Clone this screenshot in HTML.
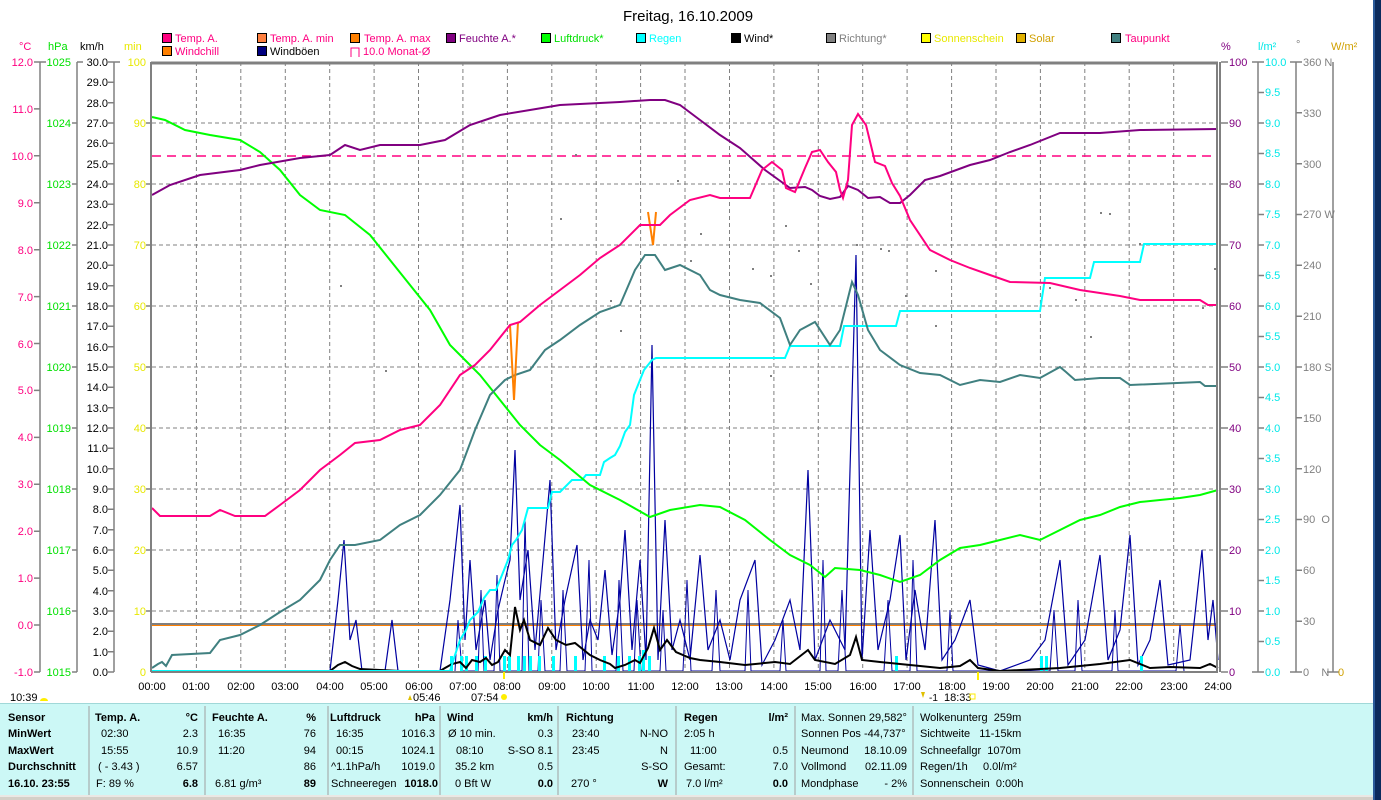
<!DOCTYPE html>
<html><head><meta charset="utf-8"><style>
html,body{margin:0;padding:0;background:#fff;width:1381px;height:800px;overflow:hidden}
svg{display:block;font-family:"Liberation Sans",sans-serif;font-size:11px}
.b{font-weight:bold}
</style></head><body>
<svg width="1381" height="800" viewBox="0 0 1381 800">
<rect x="0" y="0" width="1381" height="800" fill="#fff"/>
<rect x="1373" y="0" width="8" height="800" fill="#0b2a5c"/>
<rect x="1373" y="0" width="2" height="800" fill="#2a5a9a"/>
<text x="688" y="21" text-anchor="middle" font-size="15" fill="#000">Freitag, 16.10.2009</text>
<g stroke="#000" stroke-width="1">
<rect x="162.5" y="33.5" width="9" height="9" fill="#ff0080"/>
<rect x="257.5" y="33.5" width="9" height="9" fill="#ff8040"/>
<rect x="350.5" y="33.5" width="9" height="9" fill="#ff8000"/>
<rect x="446.5" y="33.5" width="9" height="9" fill="#800080"/>
<rect x="541.5" y="33.5" width="9" height="9" fill="#00ff00"/>
<rect x="636.5" y="33.5" width="9" height="9" fill="#00ffff"/>
<rect x="731.5" y="33.5" width="9" height="9" fill="#000"/>
<rect x="826.5" y="33.5" width="9" height="9" fill="#808080"/>
<rect x="921.5" y="33.5" width="9" height="9" fill="#ffff00"/>
<rect x="1016.5" y="33.5" width="9" height="9" fill="#e0b000"/>
<rect x="1111.5" y="33.5" width="9" height="9" fill="#408080"/>
<rect x="162.5" y="46.5" width="9" height="9" fill="#ff8000"/>
<rect x="257.5" y="46.5" width="9" height="9" fill="#000080"/>
</g>
<path d="M351 57V48H359V57" stroke="#ff0080" fill="none"/>
<g font-size="11">
<text x="175" y="42" fill="#ff0080">Temp. A.</text>
<text x="270" y="42" fill="#ff0080">Temp. A. min</text>
<text x="364" y="42" fill="#ff0080">Temp. A. max</text>
<text x="459" y="42" fill="#800080">Feuchte A.*</text>
<text x="554" y="42" fill="#00e000">Luftdruck*</text>
<text x="649" y="42" fill="#00ffff">Regen</text>
<text x="744" y="42" fill="#000">Wind*</text>
<text x="839" y="42" fill="#808080">Richtung*</text>
<text x="934" y="42" fill="#e8e800">Sonnenschein</text>
<text x="1029" y="42" fill="#d0a000">Solar</text>
<text x="1125" y="42" fill="#ff0080">Taupunkt</text>
<text x="175" y="55" fill="#ff0080">Windchill</text>
<text x="270" y="55" fill="#000">Windböen</text>
<text x="363" y="55" fill="#ff0080">10.0 Monat-Ø</text>
<text x="19" y="50" fill="#ff0080">°C</text>
<text x="48" y="50" fill="#00e000">hPa</text>
<text x="80" y="50" fill="#000">km/h</text>
<text x="124" y="50" fill="#e8e800">min</text>
<text x="1221" y="50" fill="#800080">%</text>
<text x="1258" y="50" fill="#00e8e8">l/m²</text>
<text x="1296" y="48" fill="#808080">°</text>
<text x="1331" y="50" fill="#d0a000">W/m²</text>
</g>
<g stroke="#808080" stroke-width="1.5" fill="none">
<path d="M40 62V672M77 62V672M114 62V672M1258 62V672M1296 62V672M1333 62V672"/>
<path d="M34 62H40M34 108.9H40M34 155.8H40M34 202.8H40M34 249.7H40M34 296.6H40M34 343.5H40M34 390.4H40M34 437.4H40M34 484.3H40M34 531.2H40M34 578.1H40M34 625H40M34 672H40"/>
<path d="M40 62H46M72 123H77M72 184H77M72 245H77M72 306H77M72 367H77M72 428H77M72 489H77M72 550H77M72 611H77M72 672H77"/>
<path d="M77 62H83M108 62H114M108 82.3H114M108 102.7H114M108 123H114M108 143.3H114M108 163.7H114M108 184H114M108 204.3H114M108 224.7H114M108 245H114M108 265.3H114M108 285.7H114M108 306H114M108 326.3H114M108 346.7H114M108 367H114M108 387.3H114M108 407.7H114M108 428H114M108 448.3H114M108 468.7H114M108 489H114M108 509.3H114M108 529.7H114M108 550H114M108 570.3H114M108 590.7H114M108 611H114M108 631.3H114M108 651.7H114M108 672H114"/>
<path d="M114 62H120M146 123H151M146 184H151M146 245H151M146 306H151M146 367H151M146 428H151M146 489H151M146 550H151M146 611H151"/>
<path d="M1221 62H1228M1221 123H1228M1221 184H1228M1221 245H1228M1221 306H1228M1221 367H1228M1221 428H1228M1221 489H1228M1221 550H1228M1221 611H1228M1221 672H1228"/>
<path d="M1252 62H1264M1258 92.5H1264M1258 123H1264M1258 153.5H1264M1258 184H1264M1258 214.5H1264M1258 245H1264M1258 275.5H1264M1258 306H1264M1258 336.5H1264M1258 367H1264M1258 397.5H1264M1258 428H1264M1258 458.5H1264M1258 489H1264M1258 519.5H1264M1258 550H1264M1258 580.5H1264M1258 611H1264M1258 641.5H1264M1252 672H1264"/>
<path d="M1290 62H1302M1296 112.8H1302M1296 163.7H1302M1296 214.5H1302M1296 265.3H1302M1296 316.2H1302M1296 367H1302M1296 417.8H1302M1296 468.7H1302M1296 519.5H1302M1296 570.3H1302M1296 621.2H1302M1290 672H1302"/>
<path d="M1327 672H1339"/>
</g>
<g fill="#ff0080" text-anchor="end">
<text x="33" y="66">12.0</text><text x="33" y="113">11.0</text><text x="33" y="160">10.0</text><text x="33" y="207">9.0</text><text x="33" y="254">8.0</text><text x="33" y="301">7.0</text><text x="33" y="348">6.0</text><text x="33" y="394">5.0</text><text x="33" y="441">4.0</text><text x="33" y="488">3.0</text><text x="33" y="535">2.0</text><text x="33" y="582">1.0</text><text x="33" y="629">0.0</text><text x="33" y="676">-1.0</text>
</g>
<g fill="#00e000" text-anchor="end">
<text x="71" y="66">1025</text><text x="71" y="127">1024</text><text x="71" y="188">1023</text><text x="71" y="249">1022</text><text x="71" y="310">1021</text><text x="71" y="371">1020</text><text x="71" y="432">1019</text><text x="71" y="493">1018</text><text x="71" y="554">1017</text><text x="71" y="615">1016</text><text x="71" y="676">1015</text>
</g>
<g fill="#000" text-anchor="end">
<text x="108" y="66">30.0</text><text x="108" y="86">29.0</text><text x="108" y="107">28.0</text><text x="108" y="127">27.0</text><text x="108" y="147">26.0</text><text x="108" y="168">25.0</text><text x="108" y="188">24.0</text><text x="108" y="208">23.0</text><text x="108" y="229">22.0</text><text x="108" y="249">21.0</text><text x="108" y="269">20.0</text><text x="108" y="290">19.0</text><text x="108" y="310">18.0</text><text x="108" y="330">17.0</text><text x="108" y="351">16.0</text><text x="108" y="371">15.0</text><text x="108" y="391">14.0</text><text x="108" y="412">13.0</text><text x="108" y="432">12.0</text><text x="108" y="452">11.0</text><text x="108" y="473">10.0</text><text x="108" y="493">9.0</text><text x="108" y="513">8.0</text><text x="108" y="534">7.0</text><text x="108" y="554">6.0</text><text x="108" y="574">5.0</text><text x="108" y="595">4.0</text><text x="108" y="615">3.0</text><text x="108" y="635">2.0</text><text x="108" y="656">1.0</text><text x="108" y="676">0.0</text>
</g>
<g fill="#e8e800" text-anchor="end">
<text x="146" y="66">100</text><text x="146" y="127">90</text><text x="146" y="188">80</text><text x="146" y="249">70</text><text x="146" y="310">60</text><text x="146" y="371">50</text><text x="146" y="432">40</text><text x="146" y="493">30</text><text x="146" y="554">20</text><text x="146" y="615">10</text><text x="146" y="676">0</text>
</g>
<g fill="#800080">
<text x="1229" y="66">100</text><text x="1229" y="127">90</text><text x="1229" y="188">80</text><text x="1229" y="249">70</text><text x="1229" y="310">60</text><text x="1229" y="371">50</text><text x="1229" y="432">40</text><text x="1229" y="493">30</text><text x="1229" y="554">20</text><text x="1229" y="615">10</text><text x="1229" y="676">0</text>
</g>
<g fill="#00e8e8">
<text x="1265" y="66">10.0</text><text x="1265" y="96">9.5</text><text x="1265" y="127">9.0</text><text x="1265" y="157">8.5</text><text x="1265" y="188">8.0</text><text x="1265" y="218">7.5</text><text x="1265" y="249">7.0</text><text x="1265" y="279">6.5</text><text x="1265" y="310">6.0</text><text x="1265" y="340">5.5</text><text x="1265" y="371">5.0</text><text x="1265" y="401">4.5</text><text x="1265" y="432">4.0</text><text x="1265" y="462">3.5</text><text x="1265" y="493">3.0</text><text x="1265" y="523">2.5</text><text x="1265" y="554">2.0</text><text x="1265" y="584">1.5</text><text x="1265" y="615">1.0</text><text x="1265" y="645">0.5</text><text x="1265" y="676">0.0</text>
</g>
<g fill="#808080">
<text x="1303" y="66">360 N</text><text x="1303" y="117">330</text><text x="1303" y="168">300</text><text x="1303" y="218">270 W</text><text x="1303" y="269">240</text><text x="1303" y="320">210</text><text x="1303" y="371">180 S</text><text x="1303" y="422">150</text><text x="1303" y="473">120</text><text x="1303" y="523">90&#160;&#160;O</text><text x="1303" y="574">60</text><text x="1303" y="625">30</text><text x="1303" y="676">0&#160;&#160;&#160;&#160;N</text>
</g>
<text x="1338" y="676" fill="#d0a000">0</text>
<g stroke="#808080" stroke-width="1" stroke-dasharray="4 3" fill="none">
<path d="M152 123H1217M152 184H1217M152 245H1217M152 306H1217M152 367H1217M152 428H1217M152 489H1217M152 550H1217M152 611H1217"/>
<path d="M196.4 62V672M240.8 62V672M285.3 62V672M329.7 62V672M374.1 62V672M418.5 62V672M462.9 62V672M507.4 62V672M551.8 62V672M596.2 62V672M640.6 62V672M685 62V672M729.5 62V672M773.9 62V672M818.3 62V672M862.7 62V672M907.1 62V672M951.6 62V672M996 62V672M1040.4 62V672M1084.8 62V672M1129.2 62V672M1173.7 62V672"/>
</g>
<line x1="152" y1="625.5" x2="1217" y2="625.5" stroke="#ff8000" stroke-width="1"/>
<line x1="152" y1="624" x2="1217" y2="624" stroke="#808080" stroke-width="2"/>
<line x1="152" y1="156" x2="1217" y2="156" stroke="#ff0080" stroke-width="1.5" stroke-dasharray="9 6"/>
<g fill="#808080">
<rect x="575" y="154" width="2" height="2"/><rect x="560" y="218" width="2" height="2"/><rect x="677" y="180" width="2" height="2"/><rect x="690" y="260" width="2" height="2"/><rect x="785" y="225" width="2" height="2"/><rect x="798" y="250" width="2" height="2"/><rect x="856" y="244" width="2" height="2"/><rect x="880" y="248" width="2" height="2"/><rect x="935" y="270" width="2" height="2"/><rect x="1100" y="212" width="2" height="2"/><rect x="1109" y="213" width="2" height="2"/><rect x="1139" y="243" width="2" height="2"/><rect x="1214" y="268" width="2" height="2"/><rect x="1049" y="287" width="2" height="2"/><rect x="1075" y="299" width="2" height="2"/><rect x="1202" y="307" width="2" height="2"/><rect x="1090" y="336" width="2" height="2"/><rect x="770" y="275" width="2" height="2"/><rect x="752" y="268" width="2" height="2"/><rect x="810" y="283" width="2" height="2"/><rect x="905" y="295" width="2" height="2"/><rect x="888" y="250" width="2" height="2"/><rect x="935" y="325" width="2" height="2"/><rect x="770" y="375" width="2" height="2"/><rect x="385" y="370" width="2" height="2"/><rect x="340" y="285" width="2" height="2"/><rect x="620" y="330" width="2" height="2"/><rect x="610" y="300" width="2" height="2"/><rect x="700" y="233" width="2" height="2"/></g>
<polyline fill="none" stroke="#0000a0" stroke-width="1.2" points="152,671 330,671 338,600 344,540 350,640 356,620 362,671 385,671 392,620 398,671 440,671 450,600 460,505 465,640 470,560 476,650 485,600 490,660 498,610 505,580 510,560 515,450 520,600 528,550 535,650 543,560 550,480 556,650 565,600 577,545 583,660 590,620 598,640 605,570 612,655 620,600 625,530 632,650 640,560 646,660 652,345 658,660 665,520 672,650 680,620 690,660 700,555 708,650 720,620 730,660 740,600 755,560 762,665 775,640 790,600 800,650 808,470 815,660 830,620 845,650 856,255 862,660 870,530 878,650 890,600 900,535 906,660 915,590 925,650 935,520 942,660 955,640 970,600 978,665 1000,671 1030,660 1045,640 1060,560 1068,665 1085,640 1100,555 1108,660 1120,630 1130,535 1138,665 1150,640 1160,580 1168,665 1190,660 1202,550 1208,640 1213,600 1218,660"/>
<polyline fill="none" stroke="#0000a0" stroke-width="1" points="455,671 458,620 462,671 478,671 481,590 484,671 494,671 497,575 500,671 522,671 525,520 529,671 538,671 541,600 545,671 560,671 563,590 567,671 585,671 589,560 592,671 616,671 619,580 623,671 634,671 637,600 641,671 660,671 663,610 666,671 683,671 687,580 691,671 712,671 716,590 720,671 745,671 748,590 751,671 780,671 783,620 786,671 820,671 823,560 826,671 838,671 842,590 846,671 884,671 888,600 892,671 910,671 913,560 917,671 947,671 950,610 953,671 1050,671 1054,610 1058,671 1075,671 1078,600 1082,671 1112,671 1115,610 1118,671 1176,671 1180,625 1184,671"/>
<g fill="#00ffff">
<rect x="450" y="656" width="3" height="15"/><rect x="460" y="656" width="3" height="15"/><rect x="465" y="656" width="3" height="15"/><rect x="475" y="656" width="3" height="15"/><rect x="484" y="656" width="3" height="15"/><rect x="503" y="656" width="3" height="15"/><rect x="508" y="656" width="3" height="15"/><rect x="517" y="656" width="3" height="15"/><rect x="523" y="656" width="3" height="15"/><rect x="529" y="656" width="3" height="15"/><rect x="538" y="656" width="3" height="15"/><rect x="552" y="656" width="3" height="15"/><rect x="574" y="656" width="3" height="15"/><rect x="603" y="656" width="3" height="15"/><rect x="617" y="656" width="3" height="15"/><rect x="628" y="656" width="3" height="15"/><rect x="638" y="656" width="3" height="15"/><rect x="642" y="650" width="3" height="21"/><rect x="648" y="656" width="3" height="15"/><rect x="895" y="656" width="3" height="15"/><rect x="1040" y="656" width="3" height="15"/><rect x="1045" y="656" width="3" height="15"/><rect x="1140" y="656" width="3" height="15"/></g>
<polyline fill="none" stroke="#000" stroke-width="2" points="152,671 330,671 338,665 345,662 352,666 360,669 380,670 400,671 440,671 445,668 452,664 460,662 466,668 472,660 480,662 486,658 492,665 498,662 505,650 510,655 515,607 520,630 524,620 530,640 540,645 548,628 556,640 566,645 575,643 590,655 600,660 610,664 615,668 625,665 635,660 640,663 648,648 654,628 660,650 667,640 676,652 690,658 700,660 720,662 745,665 775,662 790,664 808,650 815,660 835,664 850,655 856,637 862,660 880,662 900,664 920,666 940,668 960,666 970,660 978,668 1000,671 1060,668 1100,664 1130,660 1150,668 1170,667 1200,668 1210,664 1218,668"/>
<polyline fill="none" stroke="#00ffff" stroke-width="2" points="152,671 450,671 455,655 460,640 466,630 470,620 478,612 484,598 490,590 496,590 500,580 504,570 508,560 512,545 516,540 522,530 528,508 536,508 548,508 552,492 560,492 572,480 582,480 586,475 600,475 604,462 610,458 615,455 620,446 625,432 630,425 634,395 638,385 644,370 652,360 656,358 785,358 790,346 840,346 844,326 896,326 900,311 1040,311 1045,278 1090,278 1094,262 1140,262 1144,244 1217,244"/>
<polyline fill="none" stroke="#00ff00" stroke-width="2" points="152,117 165,120 185,130 210,135 240,140 260,152 280,170 300,195 320,210 345,215 370,235 390,260 410,285 430,310 450,345 465,360 480,375 500,400 520,425 540,445 560,460 590,485 620,500 650,517 670,510 700,505 720,507 745,520 770,540 790,555 810,565 825,577 835,568 860,570 880,575 900,582 920,575 940,560 960,548 980,545 1000,540 1020,535 1040,540 1060,530 1080,520 1100,515 1120,507 1140,502 1160,500 1180,498 1200,495 1218,490"/>
<polyline fill="none" stroke="#408080" stroke-width="2" points="152,668 158,664 162,662 166,666 172,655 210,653 220,640 240,635 260,625 280,612 300,600 320,580 330,560 340,545 355,545 380,540 400,525 420,515 440,495 460,470 475,430 490,395 505,380 515,375 530,370 545,350 560,340 580,325 600,312 620,305 635,270 645,255 655,255 665,270 680,265 700,275 710,290 720,295 740,300 760,303 780,318 790,345 800,330 815,322 830,345 840,330 852,282 858,295 868,330 880,350 900,365 920,373 940,375 960,385 980,380 1000,382 1020,375 1040,378 1060,367 1066,372 1075,380 1100,378 1120,378 1130,385 1200,382 1205,386 1218,386"/>
<polyline fill="none" stroke="#800080" stroke-width="2" points="152,195 170,185 200,175 240,170 260,165 300,158 330,155 345,145 360,150 380,145 420,145 445,140 470,125 500,115 530,110 560,105 620,102 650,100 665,100 680,105 700,120 720,135 740,148 765,170 790,188 805,187 812,190 820,196 830,199 840,197 848,186 858,190 868,198 880,197 890,203 900,203 910,195 925,180 940,176 970,165 990,160 1010,152 1030,145 1060,133 1100,133 1140,130 1218,129"/>
<polyline fill="none" stroke="#ff8000" stroke-width="2" points="510,325 514,400 518,322"/>
<polyline fill="none" stroke="#ff8000" stroke-width="2" points="648,212 653,245 656,212"/>
<polyline fill="none" stroke="#ff0080" stroke-width="2" points="152,508 160,516 210,516 220,510 235,516 265,516 280,505 300,490 320,470 340,455 355,443 380,440 400,430 420,425 440,405 460,375 475,365 490,350 510,325 520,322 540,305 560,290 580,275 600,258 620,245 640,225 660,225 670,215 690,200 710,195 720,198 750,198 762,170 772,162 782,170 786,188 795,192 805,168 812,152 820,150 828,162 836,172 840,190 843,198 848,180 852,125 858,114 866,125 875,162 885,166 892,183 900,196 910,220 930,250 950,260 970,268 990,275 1010,282 1050,283 1080,290 1120,296 1140,300 1200,300 1208,305 1218,305"/>
<g stroke="#808080" fill="none">
<path d="M151 63H1218" stroke-width="3"/>
<path d="M151 62V672M1217 62V672M1220 62V672" stroke-width="2"/>
<path d="M151 672H1218" stroke-width="2"/>
</g>
<g fill="#000" text-anchor="middle">
<text x="152" y="690">00:00</text><text x="196" y="690">01:00</text><text x="241" y="690">02:00</text><text x="285" y="690">03:00</text><text x="330" y="690">04:00</text><text x="374" y="690">05:00</text><text x="419" y="690">06:00</text><text x="463" y="690">07:00</text><text x="507" y="690">08:00</text><text x="552" y="690">09:00</text><text x="596" y="690">10:00</text><text x="641" y="690">11:00</text><text x="685" y="690">12:00</text><text x="729" y="690">13:00</text><text x="774" y="690">14:00</text><text x="818" y="690">15:00</text><text x="863" y="690">16:00</text><text x="907" y="690">17:00</text><text x="952" y="690">18:00</text><text x="996" y="690">19:00</text><text x="1040" y="690">20:00</text><text x="1085" y="690">21:00</text><text x="1129" y="690">22:00</text><text x="1174" y="690">23:00</text><text x="1218" y="690">24:00</text>
</g>
<text x="10" y="701" fill="#000">10:39</text>
<path d="M40 701a4 3 0 0 1 8 0z" fill="#ffee00"/>
<text x="413" y="701" fill="#000">05:46</text>
<path d="M408 700l2-5 2 5z" fill="#e0c000"/>
<text x="471" y="701" fill="#000">07:54</text>
<circle cx="504" cy="697" r="3" fill="#ffee00"/>
<text x="929" y="701" fill="#000" font-size="10">-1</text>
<path d="M921 692l2 6 2-6z" fill="#e0c000"/>
<text x="944" y="701" fill="#000">18:33</text>
<rect x="970" y="694" width="5" height="5" fill="none" stroke="#ffee00"/>
<line x1="978" y1="672" x2="978" y2="680" stroke="#ffee00" stroke-width="2"/>
<line x1="504" y1="672" x2="504" y2="679" stroke="#ffee00" stroke-width="2"/>
<rect x="0" y="703" width="1373" height="92" fill="#ccf8f6"/>
<line x1="0" y1="703.5" x2="1373" y2="703.5" stroke="#a0d8d8"/>
<rect x="0" y="795" width="1373" height="5" fill="#d4d0c8"/>
<path d="M0 796H1373" stroke="#fff"/>
<g stroke="#a0a0a0"><path d="M89 706V795M205 706V795M328 706V795M440 706V795M558 706V795M676 706V795M795 706V795M913 706V795"/></g>
<g fill="#000">
<text x="8" y="721" class="b">Sensor</text><text x="8" y="737" class="b">MinWert</text><text x="8" y="754" class="b">MaxWert</text><text x="8" y="770" class="b">Durchschnitt</text><text x="8" y="787" class="b">16.10. 23:55</text>
<text x="95" y="721" class="b">Temp. A.</text><text x="198" y="721" class="b" text-anchor="end">°C</text>
<text x="101" y="737">02:30</text><text x="198" y="737" text-anchor="end">2.3</text>
<text x="101" y="754">15:55</text><text x="198" y="754" text-anchor="end">10.9</text>
<text x="98" y="770">( - 3.43 )</text><text x="198" y="770" text-anchor="end">6.57</text>
<text x="96" y="787">F: 89 %</text><text x="198" y="787" text-anchor="end" class="b">6.8</text>
<text x="212" y="721" class="b">Feuchte A.</text><text x="316" y="721" class="b" text-anchor="end">%</text>
<text x="218" y="737">16:35</text><text x="316" y="737" text-anchor="end">76</text>
<text x="218" y="754">11:20</text><text x="316" y="754" text-anchor="end">94</text>
<text x="316" y="770" text-anchor="end">86</text>
<text x="215" y="787">6.81 g/m³</text><text x="316" y="787" text-anchor="end" class="b">89</text>
<text x="330" y="721" class="b">Luftdruck</text><text x="435" y="721" class="b" text-anchor="end">hPa</text>
<text x="336" y="737">16:35</text><text x="435" y="737" text-anchor="end">1016.3</text>
<text x="336" y="754">00:15</text><text x="435" y="754" text-anchor="end">1024.1</text>
<text x="331" y="770">^1.1hPa/h</text><text x="435" y="770" text-anchor="end">1019.0</text>
<text x="331" y="787">Schneeregen</text><text x="438" y="787" text-anchor="end" class="b">1018.0</text>
<text x="447" y="721" class="b">Wind</text><text x="553" y="721" class="b" text-anchor="end">km/h</text>
<text x="448" y="737">Ø 10 min.</text><text x="553" y="737" text-anchor="end">0.3</text>
<text x="456" y="754">08:10</text><text x="553" y="754" text-anchor="end">S-SO 8.1</text>
<text x="455" y="770">35.2 km</text><text x="553" y="770" text-anchor="end">0.5</text>
<text x="455" y="787">0 Bft W</text><text x="553" y="787" text-anchor="end" class="b">0.0</text>
<text x="566" y="721" class="b">Richtung</text>
<text x="572" y="737">23:40</text><text x="668" y="737" text-anchor="end">N-NO</text>
<text x="572" y="754">23:45</text><text x="668" y="754" text-anchor="end">N</text>
<text x="668" y="770" text-anchor="end">S-SO</text>
<text x="571" y="787">270 °</text><text x="668" y="787" text-anchor="end" class="b">W</text>
<text x="684" y="721" class="b">Regen</text><text x="788" y="721" class="b" text-anchor="end">l/m²</text>
<text x="684" y="737">2:05 h</text>
<text x="690" y="754">11:00</text><text x="788" y="754" text-anchor="end">0.5</text>
<text x="684" y="770">Gesamt:</text><text x="788" y="770" text-anchor="end">7.0</text>
<text x="686" y="787">7.0 l/m²</text><text x="788" y="787" text-anchor="end" class="b">0.0</text>
<text x="801" y="721">Max. Sonnen 29,582°</text>
<text x="801" y="737">Sonnen Pos -44,737°</text>
<text x="801" y="754">Neumond</text><text x="907" y="754" text-anchor="end">18.10.09</text>
<text x="801" y="770">Vollmond</text><text x="907" y="770" text-anchor="end">02.11.09</text>
<text x="801" y="787">Mondphase</text><text x="907" y="787" text-anchor="end">- 2%</text>
<text x="920" y="721">Wolkenunterg&#160;&#160;259m</text>
<text x="920" y="737">Sichtweite&#160;&#160;&#160;11-15km</text>
<text x="920" y="754">Schneefallgr&#160;&#160;1070m</text>
<text x="920" y="770">Regen/1h&#160;&#160;&#160;&#160;&#160;0.0l/m²</text>
<text x="920" y="787">Sonnenschein&#160;&#160;0:00h</text>
</g>
</svg>
</body></html>
